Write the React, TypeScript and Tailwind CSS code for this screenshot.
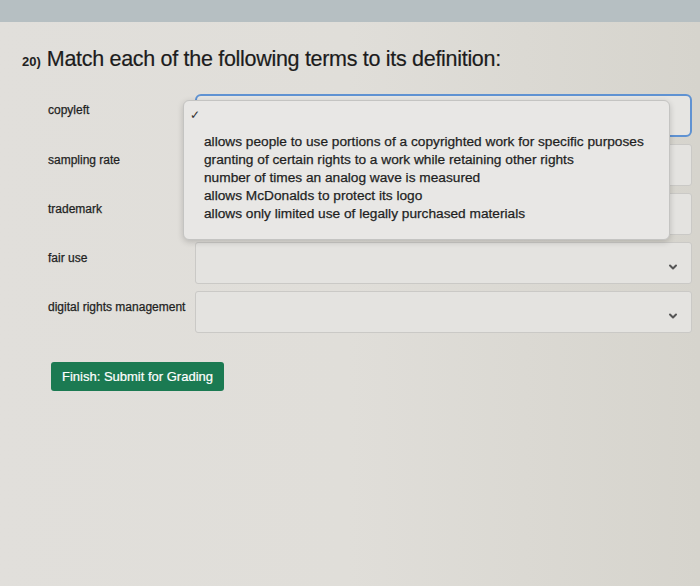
import { ChevronDown } from "lucide-react";

const terms = ["copyleft", "sampling rate", "trademark", "fair use", "digital rights management"];

const definitions = [
  "allows people to use portions of a copyrighted work for specific purposes",
  "granting of certain rights to a work while retaining other rights",
  "number of times an analog wave is measured",
  "allows McDonalds to protect its logo",
  "allows only limited use of legally purchased materials",
];

function MatchSelect({ focused, open, hideArrow }: { focused?: boolean; open?: boolean; hideArrow?: boolean }) {
  return (
    <div className="relative">
      <div
        className={
          focused
            ? "flex h-[43px] items-center justify-end rounded-md border-2 border-[#5f92d2] bg-[#e6e5e2] pr-3"
            : "flex h-[42px] items-center justify-end rounded-[3px] border border-[#cac9c6] bg-[#e4e3e0] pr-3"
        }
      >
        {!hideArrow && <ChevronDown className="mt-2 h-3 w-3 text-[#555]" strokeWidth={4} />}
      </div>
      {open && (
        <div className="absolute left-[-12px] top-[6px] z-10 w-[487px] rounded-md border border-[#c4c4c2] bg-[#e8e7e5] pb-[16px] pt-[6px] shadow-[0_2px_6px_rgba(0,0,0,0.18)]">
          <div className="pl-[6px] text-[12px] leading-[16px] text-[#333]">✓</div>
          <ul className="mt-[10px] pl-[20px] text-[13.7px] leading-[18px] text-[#1f1f1f] [-webkit-text-stroke:0.25px]">
            {definitions.map((d) => (
              <li key={d}>{d}</li>
            ))}
          </ul>
        </div>
      )}
    </div>
  );
}

export default function App() {
  return (
    <div
      className="flex h-[586px] w-[700px] flex-col overflow-hidden bg-[#dfddd8] text-[#222]"
      style={{ fontFamily: '"Liberation Sans", Arial, sans-serif' }}
    >
      <div className="h-[22px] shrink-0 bg-[#b6bfc2]" />
      <div className="flex-1 bg-gradient-to-r from-[#e1dfdb] via-[#e0ded9] to-[#d6d4cd] pl-[22px] pr-[8px] pt-[21px]">
        <h1 className="flex items-baseline gap-[6px]">
          <span className="text-[13px] font-bold">20)</span>
          <span className="text-[21.5px] tracking-[-0.3px] text-[#1c1c1c] [-webkit-text-stroke:0.2px]">
            Match each of the following terms to its definition:
          </span>
        </h1>

        <div className="mt-[19px] flex flex-col gap-[7px] pl-[26px]">
          {terms.map((t, i) => (
            <div key={t} className="grid grid-cols-[147px_1fr]">
              <div className="pt-[7px] text-[12px] text-[#1f1f1f] [-webkit-text-stroke:0.25px]">{t}</div>
              <MatchSelect focused={i === 0} open={i === 0} hideArrow={i < 3} />
            </div>
          ))}
        </div>

        <button className="ml-[29px] mt-[29px] h-[29px] rounded-[3px] bg-[#1b7a52] px-[11px] text-[13px] text-white [-webkit-text-stroke:0.2px]">
          Finish: Submit for Grading
        </button>
      </div>
    </div>
  );
}
